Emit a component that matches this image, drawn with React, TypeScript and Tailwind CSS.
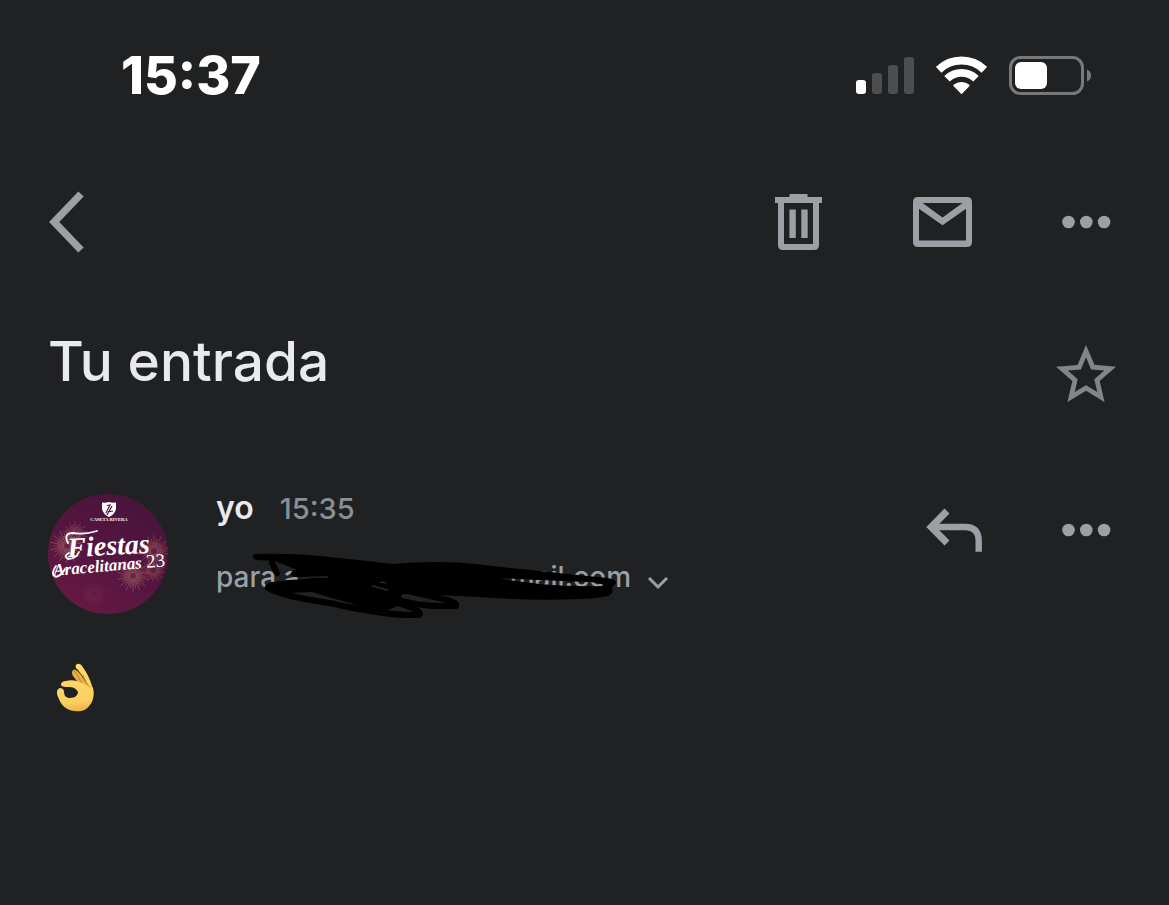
import type { ReactNode } from "react";

function IconButton({ label, children }: { label: string; children: ReactNode }) {
  return (
    <button type="button" aria-label={label} className="size-[72px] shrink-0 text-[#9aa0a6]">
      {children}
    </button>
  );
}

function Dots() {
  return (
    <svg viewBox="0 0 72 72" className="size-full" fill="currentColor">
      <circle cx="18.5" cy="36" r="6.3" />
      <circle cx="36.3" cy="36" r="6.3" />
      <circle cx="54.1" cy="36" r="6.3" />
    </svg>
  );
}

function StatusBar() {
  return (
    <div className="flex h-[152px] items-center justify-between pr-[78px] pl-[121px]">
      <time className="text-[52px] leading-[60px] font-extrabold text-white">15:37</time>
      <div className="flex items-center gap-[22px]">
        <svg viewBox="0 0 58 40" className="h-10 w-[58px]" aria-label="Cobertura">
          <rect x="0" y="24" width="10" height="14" rx="3" fill="#fff" />
          <rect x="16" y="17" width="10" height="21" rx="3" fill="#4d4e50" />
          <rect x="32" y="9" width="10" height="29" rx="3" fill="#4d4e50" />
          <rect x="48" y="1" width="10" height="37" rx="3" fill="#4d4e50" />
        </svg>
        <svg viewBox="0 0 51 40" className="h-10 w-[51px]" aria-label="Wi-Fi" fill="none">
          <path d="M2.6 13.8A32.9 32.9 0 0 1 48.4 13.8" stroke="#fff" strokeWidth="8" />
          <path d="M11 22.8A20.8 20.8 0 0 1 40 22.8" stroke="#fff" strokeWidth="7.8" />
          <path
            d="M18 29.4A11.4 11.4 0 0 1 33 29.4L25.5 37.2Z"
            fill="#fff"
            stroke="#fff"
            strokeWidth="1.4"
            strokeLinejoin="round"
          />
        </svg>
        <svg viewBox="0 0 82 40" className="h-10 w-[82px]" aria-label="Batería">
          <rect x="1.5" y="1.5" width="72" height="36" rx="10" fill="none" stroke="#77787a" strokeWidth="3" />
          <rect x="6" y="6" width="32" height="27" rx="6" fill="#fff" />
          <path d="M78 13.5Q82 15 82 19.5Q82 24 78 25.5Z" fill="#77787a" />
        </svg>
      </div>
    </div>
  );
}

function Toolbar() {
  return (
    <header className="flex items-center justify-between pt-[34px]">
      <IconButton label="Atrás">
        <svg viewBox="0 0 72 72" className="size-full" fill="none" stroke="currentColor" strokeWidth="7.4">
          <path d="M33 8L6.2 36L33 64" />
        </svg>
      </IconButton>
      <div className="flex gap-[72px]">
        <IconButton label="Eliminar">
          <svg viewBox="0 0 72 72" className="size-full" fill="currentColor" fillRule="evenodd">
            <path d="M27.5 8H45.5V11H60V17H57V59Q57 64 52 64H21Q16 64 16 59V17H13V11H27.5ZM22 17V58H51V17Z" />
            <path d="M27.4 23.5H33.8V52H27.4ZM39.3 23.5H45.7V52H39.3Z" />
          </svg>
        </IconButton>
        <IconButton label="Marcar como no leído">
          <svg viewBox="0 0 72 72" className="size-full" fill="currentColor" fillRule="evenodd">
            <path d="M12 11H61Q66 11 66 16V56Q66 61 61 61H12Q7 61 7 56V16Q7 11 12 11ZM16.5 17L36.5 31.5L56.5 17ZM13 22.8V54.5H60V22.8L36.5 39.3Z" />
          </svg>
        </IconButton>
        <IconButton label="Más opciones">
          <Dots />
        </IconButton>
      </div>
    </header>
  );
}

const bursts = [
  { x: 19, y: 52, r: 17, color: "#c9836c" },
  { x: 27, y: 40, r: 13, color: "#a9566a" },
  { x: 106, y: 57, r: 16, color: "#b8736a" },
  { x: 85, y: 82, r: 16, color: "#c4806a" },
  { x: 105, y: 76, r: 12, color: "#a85f5f" },
  { x: 46, y: 100, r: 13, color: "#7c2c4c" },
];

function Avatar() {
  return (
    <svg viewBox="0 0 120 120" className="size-[120px] shrink-0 rounded-full" role="img" aria-label="Fiestas Aracelitanas 23">
      <defs>
        <linearGradient id="sky" x1="0" y1="1" x2="0.6" y2="0">
          <stop offset="0" stopColor="#6c1a42" />
          <stop offset="0.5" stopColor="#571642" />
          <stop offset="1" stopColor="#4a143b" />
        </linearGradient>
      </defs>
      <rect width="120" height="120" fill="url(#sky)" />
      {bursts.map((b) => (
        <g key={`${b.x}-${b.y}`} stroke={b.color} strokeWidth="0.7" opacity="0.6">
          <circle cx={b.x} cy={b.y} r={b.r * 0.6} fill={b.color} fillOpacity="0.25" stroke="none" />
          {Array.from({ length: 28 }, (_, i) => {
            const a = (i * Math.PI) / 14;
            const r = b.r * (i % 2 ? 1 : 0.78);
            return (
              <line
                key={i}
                x1={b.x + Math.cos(a) * 3}
                y1={b.y + Math.sin(a) * 3}
                x2={b.x + Math.cos(a) * r}
                y2={b.y + Math.sin(a) * r}
              />
            );
          })}
        </g>
      ))}
      <path d="M54 8.5Q58 9 61 8Q64 9 68 8.5V15Q67 20 61 23Q55 20 54 15Z" fill="#fff" />
      <path d="M59 11.5L62 11L58 19M64 12L59 21M60 18L65 17" fill="none" stroke="#501540" strokeWidth="1.2" />
      <g fill="#fff" textAnchor="middle" className="font-['Liberation_Serif',serif]">
        <text x="61" y="27" fontSize="4.6" fontWeight="700">CASETA RIVERA</text>
        <g fontStyle="italic">
          <text x="61" y="61" fontSize="28" fontWeight="700" transform="rotate(-3 61 61)">Fiestas</text>
          <text x="50" y="78" fontSize="17" fontWeight="700" transform="rotate(-5 50 78)">Aracelitanas</text>
        </g>
        <text x="108" y="73" fontSize="19" transform="rotate(-4 108 73)">23</text>
      </g>
      <path
        d="M20 49Q15 39 25 39Q36 41 49 37M21 59Q15 62 20 65Q28 65 31 58M8 72Q2 81 8 83Q14 81 17 75"
        fill="none"
        stroke="#fff"
        strokeWidth="1.8"
        strokeLinecap="round"
      />
    </svg>
  );
}

function Scribble() {
  return (
    <svg
      viewBox="250 548 370 76"
      className="pointer-events-none absolute top-[-9px] left-[34px] h-[76px] w-[370px]"
      fill="none"
      stroke="#000"
      strokeWidth="6"
      strokeLinecap="round"
      strokeLinejoin="round"
      aria-hidden="true"
    >
      <path
        stroke="none"
        fill="#000"
        d="M255 554Q290 553 320 556Q360 560 392 564Q440 560 475 564Q500 567 540 571Q575 575 608 578Q617 580 616 583L612 587Q614 592 610 595Q604 598 580 599Q530 601 480 597L436 595L402 594Q400 600 404 607L398 606L385 611Q375 612 366 609L350 603Q330 598 312 592L290 593Q268 594 265 588Q264 584 272 582L288 580Q300 580 312 578H328V576L300 577Q294 578 291 575Q290 570 297 570L275 561L256 560Q250 557 255 554ZM500 578Q510 581 540 584Q575 587 603 586Q606 584 590 582Q540 580 500 578Z"
      />
      <path d="M272 563L277 573" />
      <path d="M268 588Q285 597 330 603Q385 616 419 615Q423 613 412 608L385 598" />
      <path d="M398 600Q420 606 440 606H456Q458 603 447 600L404 590" />
      <path d="M376 604L381 609" />
      <path d="M372 586L388 590M380 582L386 583" stroke="#4a4b4d" strokeWidth="0.8" />
    </svg>
  );
}

function OkHand() {
  return (
    <svg viewBox="0 0 40 52" className="h-[52px] w-10" role="img" aria-label="👌">
      <defs>
        <linearGradient id="skin" x1="0.4" y1="0" x2="0.5" y2="1">
          <stop offset="0" stopColor="#ffdc67" />
          <stop offset="0.8" stopColor="#fbd063" />
          <stop offset="1" stopColor="#eeb04a" />
        </linearGradient>
      </defs>
      <path d="M17 8Q15 10 17 14L24 23L33 25L25 13Q19 6 17 8Z" fill="#e9ae45" />
      <path
        fillRule="evenodd"
        fill="url(#skin)"
        d="M21 2Q24 1 26 4C31 11 34 17 36 24C39 29 38 38 34 43C30 49 24 50 18 49C10 48 5 43 2 35C0 30 1 27 4 26Q7 26 8 29C8 34 10 36 14 36C19 36 22 33 22 30C20 26 17 25 12 25C8 25 5 25 5 22Q6 19 10 19C16 17 22 19 26 21L32 24C28 15 23 9 20 6Q19 3 21 2Z"
      />
      <path d="M25 20Q22 13 18 9M34 25Q30 22 27 13" fill="none" stroke="#b9802c" strokeWidth="1" strokeLinecap="round" />
    </svg>
  );
}

export default function App() {
  return (
    <div className="min-h-screen bg-[#202123] font-['Inter','Liberation_Sans',sans-serif]">
      <StatusBar />
      <main className="pr-[47px] pl-12">
        <Toolbar />
        <div className="flex items-start justify-between pt-[67px]">
          <h1 className="text-[55px] leading-[72px] font-medium text-[#e8eaed]">Tu entrada</h1>
          <div className="pt-[14px]">
            <IconButton label="Destacar">
              <svg viewBox="0 0 24 24" className="size-full" fill="#80868b">
                <path d="M22 9.24l-7.19-.62L12 2 9.19 8.63 2 9.24l5.46 4.73L5.82 21 12 17.27 18.18 21l-1.63-7.03L22 9.24zM12 15.4l-3.76 2.27 1-4.28-3.32-2.88 4.38-.38L12 6.1l1.71 4.04 4.38.38-3.32 2.88 1 4.28L12 15.4z" />
              </svg>
            </IconButton>
          </div>
        </div>
        <article className="pt-[77px]">
          <div className="flex items-start">
            <Avatar />
            <div className="min-w-0 flex-1 pl-12">
              <div className="flex items-baseline gap-[26px] leading-7">
                <span className="text-[32px] font-semibold text-[#e8eaed]">yo</span>
                <time className="text-[29px] font-medium text-[#8b8f95]">15:35</time>
              </div>
              <button
                type="button"
                aria-label="Mostrar detalles"
                className="relative mt-[34px] flex items-center gap-4 text-[28px] leading-10 font-medium text-[#9aa0a6]"
              >
                <span className="flex w-[415px] justify-between">
                  <span>para a</span>
                  <span>mail.com</span>
                </span>
                <svg viewBox="0 0 22 16" className="mt-3 h-4 w-[22px]" fill="none" stroke="currentColor" strokeWidth="3">
                  <path d="M2 3L11 12L20 3" />
                </svg>
                <Scribble />
              </button>
            </div>
            <div className="flex gap-[60px]">
              <IconButton label="Responder">
                <svg viewBox="0 0 72 72" className="size-full" fill="none" stroke="currentColor" strokeWidth="6.4">
                  <path d="M29 17L13.2 33L29 49" strokeWidth="7" />
                  <path d="M14 33H47Q60.7 33 60.7 47V57.7" />
                </svg>
              </IconButton>
              <IconButton label="Más opciones del mensaje">
                <Dots />
              </IconButton>
            </div>
          </div>
          <div className="pt-12 pl-2">
            <OkHand />
          </div>
        </article>
      </main>
    </div>
  );
}
